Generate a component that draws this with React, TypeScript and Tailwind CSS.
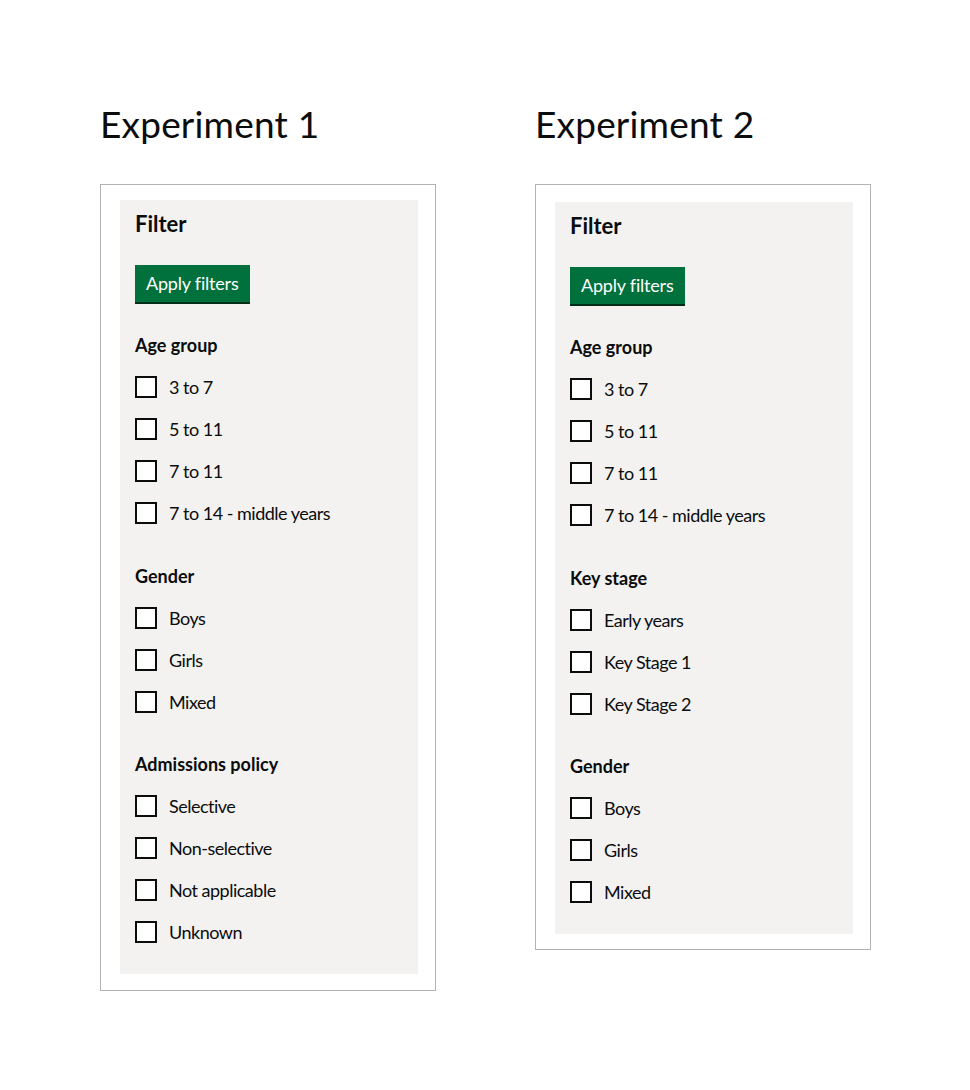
import React from "react";

type Section = { title: string; items: string[] };

const exp1: Section[] = [
  { title: "Age group", items: ["3 to 7", "5 to 11", "7 to 11", "7 to 14 - middle years"] },
  { title: "Gender", items: ["Boys", "Girls", "Mixed"] },
  { title: "Admissions policy", items: ["Selective", "Non-selective", "Not applicable", "Unknown"] },
];

const exp2: Section[] = [
  { title: "Age group", items: ["3 to 7", "5 to 11", "7 to 11", "7 to 14 - middle years"] },
  { title: "Key stage", items: ["Early years", "Key Stage 1", "Key Stage 2"] },
  { title: "Gender", items: ["Boys", "Girls", "Mixed"] },
];

function Card({ sections, shifted }: { sections: Section[]; shifted?: boolean }) {
  return (
    <div
      className={
        "w-[336px] border border-[#b1b4b6] bg-white pl-[19px] pr-[17px] " +
        (shifted ? "pt-[17px] pb-[15px]" : "pt-[15px] pb-[16px]")
      }
    >
      <div className="bg-[#f3f2f1] pl-[15px] pr-4 pt-[10px] pb-[31px]">
        <h2 className="text-[22px] leading-[28px] font-bold text-[#0b0c0c]">Filter</h2>
        <button className="mt-[27px] h-[37px] px-[11px] bg-[#00703c] text-white text-[18px] leading-[37px] tracking-[-0.2px] shadow-[0_2px_0_#002d18]">
          Apply filters
        </button>
        <div className="mt-[31px] flex flex-col gap-[39.5px]">
          {sections.map((s) => (
            <div key={s.title}>
              <h3 className="text-[18px] leading-[24px] font-bold text-[#0b0c0c]">{s.title}</h3>
              <div className="mt-[19px] flex flex-col gap-[20px]">
                {s.items.map((it) => (
                  <label key={it} className="flex items-center gap-3 h-[22px]">
                    <span className="w-[22px] h-[22px] border-2 border-[#0b0c0c] bg-white shrink-0" />
                    <span className="text-[18px] leading-[22px] tracking-[-0.5px] text-[#0b0c0c]">{it}</span>
                  </label>
                ))}
              </div>
            </div>
          ))}
        </div>
      </div>
    </div>
  );
}

export default function App() {
  return (
    <div
      className="min-h-[1090px] bg-white pl-[100px] pt-[105px]"
      style={{ fontFamily: "Lato, 'Liberation Sans', sans-serif" }}
    >
      <div className="flex items-start gap-[99px]">
        <div>
          <h1 className="text-[37px] leading-[37px] font-normal tracking-[0.2px] text-[#0b0c0c]">Experiment 1</h1>
          <div className="mt-[42px]">
            <Card sections={exp1} />
          </div>
        </div>
        <div>
          <h1 className="text-[37px] leading-[37px] font-normal tracking-[0.2px] text-[#0b0c0c]">Experiment 2</h1>
          <div className="mt-[42px]">
            <Card sections={exp2} shifted />
          </div>
        </div>
      </div>
    </div>
  );
}
